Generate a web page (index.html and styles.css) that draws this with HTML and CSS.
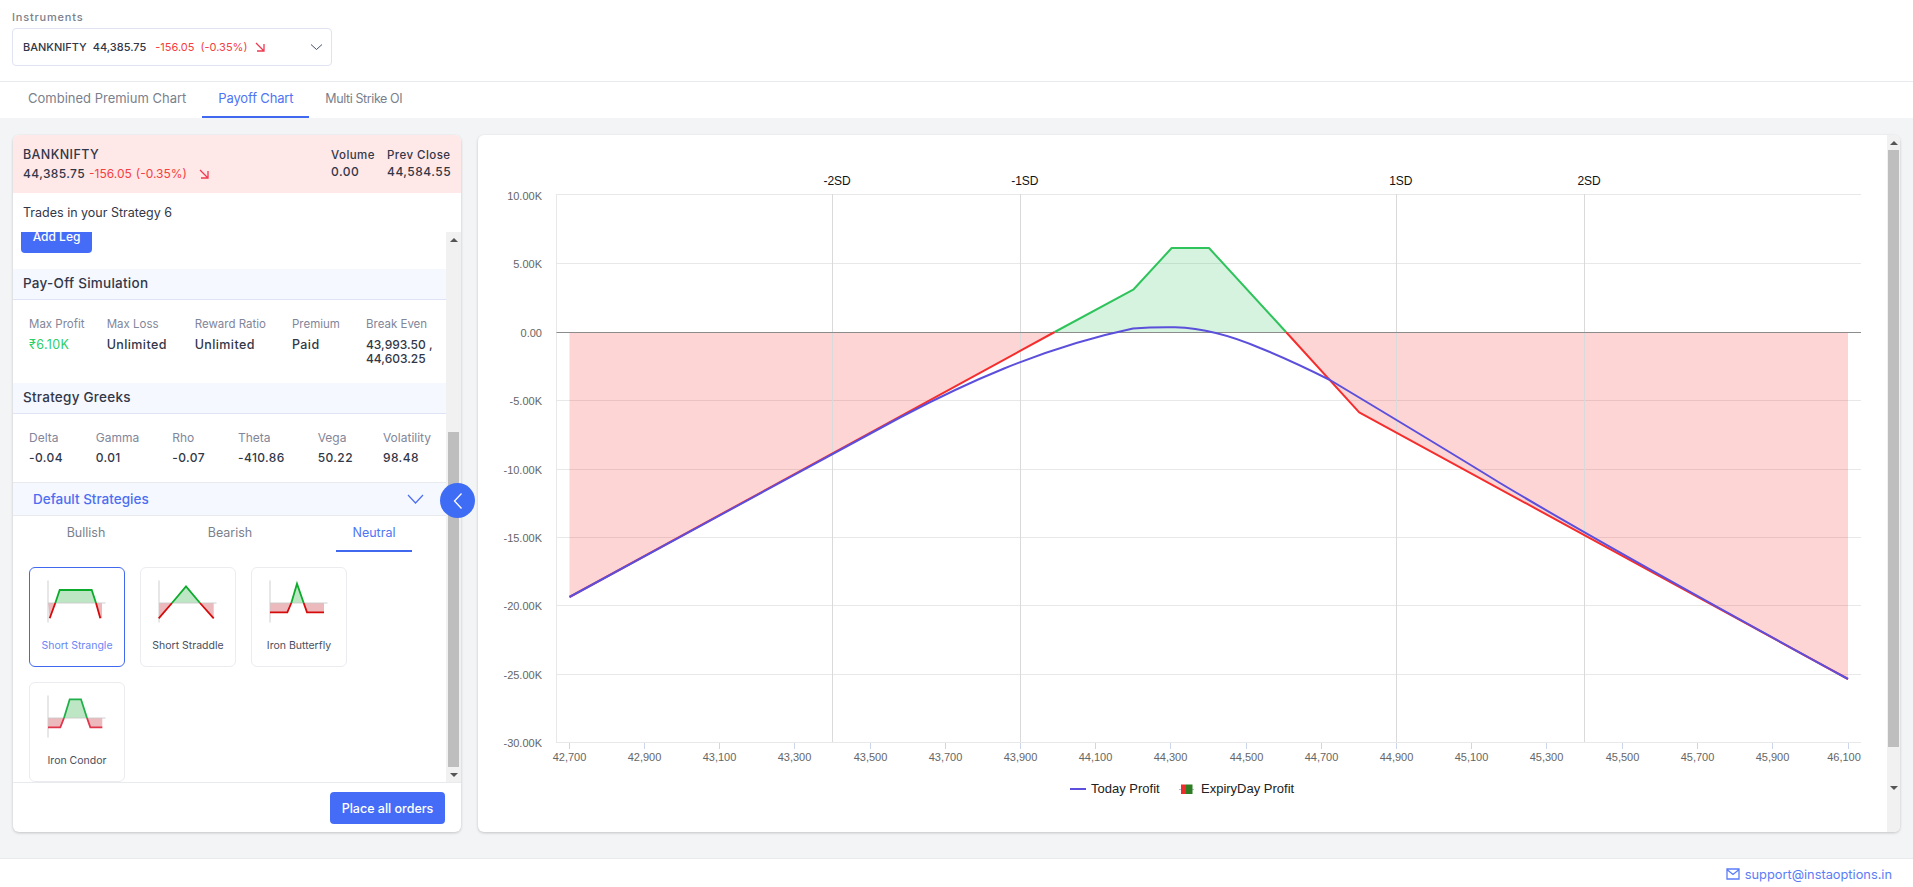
FILE: index.html
```html
<!DOCTYPE html>
<html lang="en">
<head>
  <meta charset="UTF-8"/>
  <title>Payoff Chart</title>
  <meta name="viewport" content="width=device-width, initial-scale=1.0"/>
  <link rel="stylesheet" href="styles.css">
</head>
<body>
  <header class="top">
    <div class="top-label">Instruments</div>
    <div class="select">
      <b class="sym">BANKNIFTY</b>
      <span class="ltp">44,385.75</span>
      <span class="chg">-156.05</span>
      <span class="chg">(-0.35%)</span>
      <svg class="arrow" width="10" height="10" viewBox="0 0 10 10"><path d="M1 1L8.5 8.5M9 2V9H2"/></svg>
      <svg class="select-chev" width="13" height="8" viewBox="0 0 13 8"><path d="M1 1.5L6.5 6.5L12 1.5"/></svg>
    </div>
  </header>

  <nav class="tabs">
    <a class="tab">Combined Premium Chart</a>
    <a class="tab active">Payoff Chart</a>
    <a class="tab tight">Multi Strike OI</a>
  </nav>

  <main class="main">
    <section class="card left">
      <div class="quote">
        <div class="quote-name">
          <div class="quote-sym">BANKNIFTY</div>
          <div class="quote-line">
            <span class="quote-ltp">44,385.75</span>
            <span class="chg">-156.05</span>
            <span class="chg">(-0.35%)</span>
            <svg class="arrow" width="10" height="10" viewBox="0 0 10 10"><path d="M1 1L8.5 8.5M9 2V9H2"/></svg>
          </div>
        </div>
        <div class="quote-col">
          <div class="quote-head">Volume</div>
          <div class="quote-val">0.00</div>
        </div>
        <div class="quote-col">
          <div class="quote-head">Prev Close</div>
          <div class="quote-val">44,584.55</div>
        </div>
      </div>

      <div class="trades">Trades in your Strategy 6</div>

      <div class="scroll">
        <div class="scroll-body">
          <button class="add-leg">Add Leg</button>

          <h3 class="band band-first">Pay-Off Simulation</h3>
          <div class="stats">
            <div><div class="stat-label">Max Profit</div><div class="stat-val green">₹6.10K</div></div>
            <div><div class="stat-label">Max Loss</div><div class="stat-val">Unlimited</div></div>
            <div><div class="stat-label">Reward Ratio</div><div class="stat-val">Unlimited</div></div>
            <div><div class="stat-label">Premium</div><div class="stat-val">Paid</div></div>
            <div><div class="stat-label">Break Even</div><div class="stat-val be">43,993.50 ,<br>44,603.25</div></div>
          </div>

          <h3 class="band">Strategy Greeks</h3>
          <div class="greeks">
            <div><div class="stat-label">Delta</div><div class="stat-val">-0.04</div></div>
            <div><div class="stat-label">Gamma</div><div class="stat-val">0.01</div></div>
            <div><div class="stat-label">Rho</div><div class="stat-val">-0.07</div></div>
            <div><div class="stat-label">Theta</div><div class="stat-val">-410.86</div></div>
            <div><div class="stat-label">Vega</div><div class="stat-val">50.22</div></div>
            <div><div class="stat-label">Volatility</div><div class="stat-val">98.48</div></div>
          </div>

          <div class="accordion">
            <span>Default Strategies</span>
            <svg width="17" height="10" viewBox="0 0 17 10"><path d="M1 1L8.5 9L16 1"/></svg>
          </div>

          <div class="subtabs">
            <a class="subtab">Bullish</a>
            <a class="subtab">Bearish</a>
            <a class="subtab active">Neutral</a>
          </div>

          <div class="strategies">
            <div class="strategy active">
              <svg class="mini" width="96" height="60" viewBox="0 0 96 60">
                <path class="m-red-fill" d="M19 36H26.3L20.7 51.3ZM67 36H73V51.3H71.3Z"/>
                <path class="m-green-fill" d="M26.3 36L30.7 23H62.7L67 36Z"/>
                <path class="m-axis" d="M19 13.5V55.5M19 36H76.5"/>
                <path class="m-red" d="M20.7 51.3L26.3 36M67 36L71.3 51.3"/>
                <path class="m-green" d="M26.3 36L30.7 23H62.7L67 36"/>
              </svg>
              <div class="strategy-name">Short Strangle</div>
            </div>
            <div class="strategy">
              <svg class="mini" width="96" height="60" viewBox="0 0 96 60">
                <path class="m-red-fill" d="M19 36H32L19 51.3ZM60 36H73.7V51.3Z"/>
                <path class="m-green-fill" d="M32 36L46 19.3L60 36Z"/>
                <path class="m-axis" d="M19 13.5V55.5M19 36H76.5"/>
                <path class="m-red" d="M18.7 51.3L32 36M60 36L73.7 51.3"/>
                <path class="m-green" d="M32 36L46 19.3L60 36"/>
              </svg>
              <div class="strategy-name">Short Straddle</div>
            </div>
            <div class="strategy">
              <svg class="mini" width="96" height="60" viewBox="0 0 96 60">
                <path class="m-red-fill" d="M19 36H40.3L36.3 45.3H19ZM52.7 36H73V45.3H56Z"/>
                <path class="m-green-fill" d="M40.3 36L46 16.7L52.7 36Z"/>
                <path class="m-axis" d="M19 13.5V55.5M19 36H76.5"/>
                <path class="m-red" d="M19 45.3H36.3L40.3 36M52.7 36L56 45.3H73"/>
                <path class="m-green" d="M40.3 36L46 16.7L52.7 36"/>
              </svg>
              <div class="strategy-name">Iron Butterfly</div>
            </div>
            <div class="strategy">
              <svg class="mini" width="96" height="60" viewBox="0 0 96 60">
                <path class="m-red-fill" d="M19 36H35L31.3 45.3H19ZM58 36H73.3V45.3H61.3Z"/>
                <path class="m-green-fill" d="M35 36L40.7 17.3H52L58 36Z"/>
                <path class="m-axis" d="M19 13.5V55.5M19 36H76.5"/>
                <path class="m-red soft" d="M19 45.3H31.3L35 36M58 36L61.3 45.3H73.3"/>
                <path class="m-green soft" d="M35 36L40.7 17.3H52L58 36"/>
              </svg>
              <div class="strategy-name">Iron Condor</div>
            </div>
          </div>
        </div>

        <div class="scrollbar">
          <div class="sb-btn"><i class="tri-up"></i></div>
          <div class="sb-thumb"></div>
          <div class="sb-btn"><i class="tri-down"></i></div>
        </div>
      </div>

      <div class="card-foot">
        <button class="place">Place all orders</button>
      </div>

      <button class="collapse" aria-label="Collapse">
        <svg width="10" height="18" viewBox="0 0 10 18"><path d="M8.5 1.5L1.5 9L8.5 16.5"/></svg>
      </button>
    </section>

    <section class="card right">
      <!-- coordinates are page pixels, so the viewBox starts at the panel corner -->
      <svg class="chart" width="1409" height="697" viewBox="478 135 1409 697">
        <path class="grid" d="M556.5 194.5H1861M556.5 263.5H1861M556.5 400.5H1861M556.5 469.5H1861M556.5 537.5H1861M556.5 605.5H1861M556.5 674.5H1861M556.5 742.5H1861M556.5 194V743"/>
        <path class="ticks" d="M569.5 743V749M644.5 743V749M719.5 743V749M794.5 743V749M870.5 743V749M945.5 743V749M1020.5 743V749M1095.5 743V749M1170.5 743V749M1246.5 743V749M1321.5 743V749M1396.5 743V749M1471.5 743V749M1546.5 743V749M1622.5 743V749M1697.5 743V749M1772.5 743V749M1848.5 743V749"/>

        <path class="fill-red" d="M569.5 332V597L1054.7 332Z"/>
        <path class="fill-red" d="M1286 332L1359.2 412.3L1848 679V332Z"/>
        <path class="fill-green" d="M1054.7 332L1133.7 289.3L1171.7 248H1209L1286 332Z"/>

        <path class="sd-line" d="M832.5 194V742M1020.5 194V742M1396.5 194V742M1584.5 194V742"/>
        <path class="zero" d="M556.5 332.5H1861"/>

        <path class="line-red" d="M569.5 597L1054.7 332"/>
        <path class="line-red" d="M1286 332L1359.2 412.3L1848 679"/>
        <path class="line-green" d="M1054.7 332L1133.7 289.3L1171.7 248H1209L1286 332"/>
        <path class="line-blue" d="M569.5 597L900 417.5C960 386 1040 348 1133 328.5C1145 327.5 1160 327 1175 327.2C1200 328 1230 335 1260 348C1290 360 1310 370 1330 380C1360 398 1440 446 1500 483C1560 519 1700 598 1848 679"/>

        <text class="sd-text" x="823.4" y="185">-2SD</text>
        <text class="sd-text" x="1011.2" y="185">-1SD</text>
        <text class="sd-text" x="1389.2" y="185">1SD</text>
        <text class="sd-text" x="1577.4" y="185">2SD</text>

        <g class="y-labels">
          <text x="542" y="200">10.00K</text>
          <text x="542" y="268">5.00K</text>
          <text x="542" y="337">0.00</text>
          <text x="542" y="405">-5.00K</text>
          <text x="542" y="474">-10.00K</text>
          <text x="542" y="542">-15.00K</text>
          <text x="542" y="610">-20.00K</text>
          <text x="542" y="679">-25.00K</text>
          <text x="542" y="747">-30.00K</text>
        </g>
        <g class="x-labels">
          <text x="569.5" y="761">42,700</text>
          <text x="644.5" y="761">42,900</text>
          <text x="719.5" y="761">43,100</text>
          <text x="794.5" y="761">43,300</text>
          <text x="870.5" y="761">43,500</text>
          <text x="945.5" y="761">43,700</text>
          <text x="1020.5" y="761">43,900</text>
          <text x="1095.5" y="761">44,100</text>
          <text x="1170.5" y="761">44,300</text>
          <text x="1246.5" y="761">44,500</text>
          <text x="1321.5" y="761">44,700</text>
          <text x="1396.5" y="761">44,900</text>
          <text x="1471.5" y="761">45,100</text>
          <text x="1546.5" y="761">45,300</text>
          <text x="1622.5" y="761">45,500</text>
          <text x="1697.5" y="761">45,700</text>
          <text x="1772.5" y="761">45,900</text>
          <text x="1844" y="761">46,100</text>
        </g>

        <path class="legend-line" d="M1070 789H1086"/>
        <text class="legend-text" x="1091" y="793">Today Profit</text>
        <path class="legend-thin" d="M1179 789.5H1194"/>
        <rect class="legend-red" x="1181" y="784.5" width="5" height="9.5"/>
        <rect class="legend-green" x="1186" y="784.5" width="6.5" height="9.5"/>
        <text class="legend-text" x="1201" y="793">ExpiryDay Profit</text>
      </svg>

      <div class="scrollbar slim">
        <div class="sb-btn"><i class="tri-up"></i></div>
        <div class="sb-thumb"></div>
        <div class="sb-btn"><i class="tri-down"></i></div>
      </div>
    </section>
  </main>

  <footer class="foot">
    <svg width="14" height="12" viewBox="0 0 14 12"><path d="M1 1H13V11H1ZM1.5 2L7 6.5L12.5 2"/></svg>
    <a class="mail">support@instaoptions.in</a>
  </footer>
</body>
</html>
```

FILE: styles.css
```css
* {
  box-sizing: border-box;
}
body {
  margin: 0;
  height: 887px;
  overflow: hidden;
  display: flex;
  flex-direction: column;
  font-family: Inter, "Noto Sans", sans-serif;
  color: #323748;
  background-color: #fff;
}
h3 {
  margin: 0;
}
.green {
  color: #2dce68 !important;
  font-weight: 400 !important;
}
.chg {
  color: #f4403f;
}
.arrow path {
  fill: none;
  stroke: #ee3a52;
  stroke-width: 1.3;
}

/* top bar */
.top {
  height: 82px;
  padding: 11px 12px 0;
  border-bottom: 1px solid #e8eaee;
}
.top-label {
  height: 17px;
  line-height: 12px;
  font-size: 11px;
  font-weight: 500;
  letter-spacing: 0.8px;
  color: #7b808c;
}
.select {
  width: 320px;
  height: 38px;
  padding: 0 10px;
  display: flex;
  align-items: center;
  font-size: 11px;
  background-color: #fff;
  border: 1px solid #dfe3f1;
  border-radius: 4px;
}
.sym {
  font-weight: 500;
  margin-right: 6px;
}
.ltp {
  font-weight: 500;
  margin-right: 9px;
}
.select .chg {
  margin-right: 6px;
}
.select .arrow {
  margin-left: 2px;
}
.select-chev {
  margin-left: auto;
  margin-right: -2px;
}
.select-chev path {
  fill: none;
  stroke: #47506a;
  stroke-width: 1;
}

/* tabs */
.tabs {
  height: 36px;
  padding-left: 12px;
  display: flex;
}
.tab {
  padding: 0 16px;
  line-height: 33px;
  font-size: 13px;
  color: #7a7f8c;
  border-bottom: 2px solid transparent;
}
.tab.active {
  width: 107px;
  white-space: nowrap;
  letter-spacing: -0.15px;
  color: #4f74f5;
  border-bottom-color: #4169f0;
}
.tab.tight {
  font-size: 12.5px;
  letter-spacing: -0.4px;
}

/* main area */
.main {
  flex: 1;
  padding: 17px 13px 25px;
  display: flex;
  gap: 17px;
  background-color: #f3f4f6;
}
.card {
  height: 697px;
  background-color: #fff;
  border-radius: 6px;
  box-shadow: 0 1px 3px rgba(0, 0, 0, 0.2);
}
.left {
  position: relative;
  width: 448px;
  display: flex;
  flex-direction: column;
}
.right {
  width: 1422px;
  display: flex;
  overflow: hidden;
}

/* quote header */
.quote {
  height: 58px;
  padding: 11px 10px 0;
  display: flex;
  font-size: 12px;
  background-color: #ffe8e8;
  border-radius: 6px 6px 0 0;
}
.quote-name {
  width: 308px;
}
.quote-sym {
  font-size: 12.5px;
  font-weight: 500;
  letter-spacing: 0.4px;
  line-height: 17px;
}
.quote-line {
  margin-top: 2px;
  line-height: 18px;
  display: flex;
  align-items: center;
  gap: 4px;
}
.quote-line .arrow {
  margin-left: 8px;
}
.quote-ltp {
  font-weight: 500;
  letter-spacing: 0.4px;
}
.quote-col {
  width: 56px;
  white-space: nowrap;
}
.quote-head {
  font-size: 11.5px;
  font-weight: 500;
  letter-spacing: 0.45px;
  line-height: 18px;
}
.quote-val {
  font-weight: 500;
  letter-spacing: 0.5px;
  line-height: 16px;
}
.trades {
  height: 39px;
  padding: 12px 10px 0;
  line-height: 15px;
  font-size: 12.5px;
}

/* scrolled part of the left card */
.scroll {
  height: 550px;
  display: flex;
  overflow: hidden;
}
.scroll-body {
  width: 433px;
  margin-top: -11px;
}
.add-leg {
  display: block;
  width: 71px;
  height: 32px;
  margin-left: 8px;
  padding: 0 0 1px;
  font: 500 12px Inter, sans-serif;
  color: #fff;
  background-color: #456cf6;
  border: none;
  border-radius: 4px;
}
.band {
  height: 31px;
  padding-left: 10px;
  line-height: 29px;
  font-size: 13.5px;
  font-weight: 500;
  letter-spacing: 0.25px;
  background-color: #f5f8ff;
  border-bottom: 1px solid #dfe3f5;
}
.band-first {
  margin-top: 16px;
}
.stats,
.greeks {
  padding: 16px 0 0 16px;
  display: grid;
}
.stats {
  height: 83px;
  grid-template-columns: 77.7px 88px 97.3px 74px 1fr;
}
.greeks {
  height: 68px;
  grid-template-columns: 66.7px 76.6px 65.7px 79.7px 65.3px 1fr;
}
.stat-label {
  line-height: 16px;
  font-size: 11.5px;
  color: #82869a;
  white-space: nowrap;
}
.greeks .stat-label {
  font-size: 12px;
}
.stat-val {
  margin-top: 6px;
  line-height: 14px;
  font-size: 12.5px;
  font-weight: 500;
  letter-spacing: 0.4px;
  white-space: nowrap;
}
.stat-val.be {
  font-size: 12px;
  letter-spacing: 0;
}
.greeks .stat-val {
  margin-top: 5px;
  font-size: 12px;
  letter-spacing: 0.4px;
}
.accordion {
  height: 34px;
  padding: 0 22px 0 20px;
  display: flex;
  align-items: center;
  justify-content: space-between;
  font-size: 13.5px;
  font-weight: 500;
  color: #4c6ef2;
  background-color: #f5f8ff;
  border-top: 1px solid #e8eaee;
  border-bottom: 1px solid #e8eaee;
}
.accordion path {
  fill: none;
  stroke: #4c6ef2;
  stroke-width: 1.2;
}
.subtabs {
  height: 36px;
  padding-left: 17px;
  display: grid;
  grid-template-columns: 112px 176px 112px;
  justify-items: center;
}
.subtab {
  height: 36px;
  line-height: 34px;
  font-size: 12.5px;
  color: #7a7f8c;
  padding: 0 14px;
}
.subtab.active {
  width: 76px;
  padding: 0;
  text-align: center;
  color: #4f74f5;
  border-bottom: 2px solid #4169f0;
}
.strategies {
  padding: 15px 0 0 16px;
  display: grid;
  grid-template-columns: repeat(3, 96px);
  gap: 15px;
}
.strategy {
  height: 100px;
  background-color: #fff;
  border: 1px solid #ececf0;
  border-radius: 6px;
}
.strategy.active {
  border-color: #4169f0;
}
.strategy.active .strategy-name {
  color: #6b86f5;
}
.mini {
  display: block;
  margin: -1px;
}
.m-axis {
  fill: none;
  stroke: #c9c9c9;
  stroke-width: 0.9;
}
.m-red-fill {
  fill: #ecb9bc;
}
.m-green-fill {
  fill: #bde6c4;
}
.m-red,
.m-green {
  fill: none;
  stroke-width: 1.8;
}
.m-red {
  stroke: #d50a0a;
}
.m-green {
  stroke: #0cab2c;
}
.m-red.soft {
  stroke: #e0364b;
}
.m-green.soft {
  stroke: #1fb04a;
}
.strategy-name {
  margin-top: 13px;
  line-height: 14px;
  font-size: 10.5px;
  text-align: center;
  color: #4a4f5e;
  white-space: nowrap;
}

/* scrollbars */
.scrollbar {
  width: 15px;
  flex: none;
  display: flex;
  flex-direction: column;
  background-color: #f1f1f1;
}
.sb-btn {
  height: 15px;
  display: flex;
  align-items: center;
  justify-content: center;
  flex: none;
}
.sb-thumb {
  height: 335px;
  margin: 185px 2px 0;
  background-color: #bebebe;
}
.slim {
  width: 13px;
}
.slim .sb-thumb {
  height: 597px;
  margin: 0 1px;
}
.slim .sb-btn {
  height: 50px;
}
.slim .sb-btn:first-child {
  height: 15px;
}
.slim .sb-btn:last-child {
  align-items: flex-end;
  padding-bottom: 7px;
}
.tri-up,
.tri-down {
  width: 0;
  height: 0;
  border-left: 4px solid transparent;
  border-right: 4px solid transparent;
}
.tri-up {
  border-bottom: 4px solid #555;
}
.tri-down {
  border-top: 4px solid #555;
}

.card-foot {
  height: 50px;
  padding: 9px 16px 0 0;
  display: flex;
  justify-content: flex-end;
  align-items: flex-start;
  border-top: 1px solid #e8eaee;
}
.place {
  width: 115px;
  height: 32px;
  padding: 0;
  font: 500 12.5px Inter, sans-serif;
  color: #fff;
  background-color: #456cf6;
  border: none;
  border-radius: 4px;
}
.collapse {
  position: absolute;
  left: 427px;
  top: 348px;
  width: 35px;
  height: 35px;
  padding: 0;
  display: flex;
  align-items: center;
  justify-content: center;
  background-color: #3f6cf5;
  border: none;
  border-radius: 50%;
}
.collapse path {
  fill: none;
  stroke: #fff;
  stroke-width: 1.3;
}

/* payoff chart */
.chart {
  display: block;
  flex: none;
  font-family: "Liberation Sans", Arial, sans-serif;
}
.grid {
  fill: none;
  stroke: #e8e8e8;
  stroke-width: 1;
}
.ticks {
  fill: none;
  stroke: #ccd6eb;
  stroke-width: 1;
}
.fill-red {
  fill: rgba(245, 45, 45, 0.2);
}
.fill-green {
  fill: rgba(47, 195, 92, 0.2);
}
.sd-line {
  fill: none;
  stroke: #dadada;
  stroke-width: 1;
}
.zero {
  fill: none;
  stroke: #8c8c8c;
  stroke-width: 1;
}
.line-red,
.line-green,
.line-blue {
  fill: none;
  stroke-width: 2;
  stroke-linejoin: round;
}
.line-red {
  stroke: #f52d2d;
}
.line-green {
  stroke: #2fc35c;
}
.line-blue {
  stroke: #5b4fdb;
}
.sd-text {
  font-size: 12px;
  fill: #111;
}
.y-labels text,
.x-labels text {
  font-size: 11px;
  fill: #666;
}
.y-labels text {
  text-anchor: end;
}
.x-labels text {
  text-anchor: middle;
}
.legend-line {
  fill: none;
  stroke: #5b4fdb;
  stroke-width: 2;
}
.legend-thin {
  fill: none;
  stroke: #a9b8e8;
  stroke-width: 1;
}
.legend-red {
  fill: #ee2d2d;
}
.legend-green {
  fill: #2e7d22;
}
.legend-text {
  font-size: 13px;
  fill: #222;
}

/* footer */
.foot {
  height: 29px;
  padding-right: 21px;
  display: flex;
  align-items: center;
  justify-content: flex-end;
  gap: 5px;
  background-color: #fff;
  border-top: 1px solid #e8eaee;
}
.foot svg {
  position: relative;
  top: 1px;
}
.foot path {
  fill: none;
  stroke: #5b7cf7;
  stroke-width: 1.3;
}
.mail {
  position: relative;
  top: 1px;
  font-size: 12.8px;
  color: #5b7cf7;
}
```
